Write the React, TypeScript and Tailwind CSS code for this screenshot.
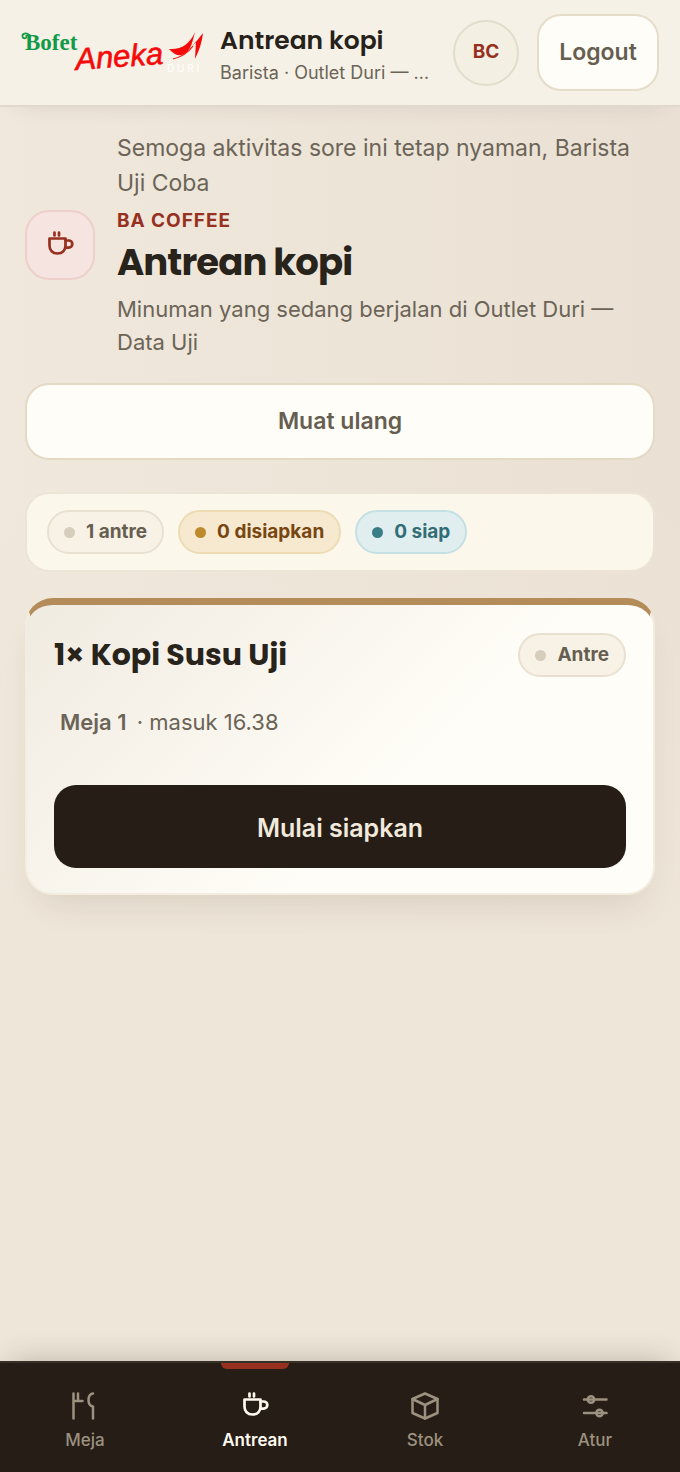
import React from 'react';
import { clsx } from 'clsx';

type IconProps = { className?: string };

const CupIcon: React.FC<IconProps> = ({ className }) => (
  <svg className={className} viewBox="0 0 28 28" fill="none" stroke="currentColor" strokeWidth="2.7" strokeLinecap="round" strokeLinejoin="round" aria-hidden="true">
    <path d="M3.5 7.5h16v7c0 5-3 8-8 8s-8-3-8-8z" />
    <path d="M19.500 9.500h3.200a3.600 3.600 0 0 1 0 7.200h-3.200" />
    <path d="M8.500 1.500v3M13 1.500v3" />
  </svg>
);

const TableIcon: React.FC<IconProps> = ({ className }) => (
  <svg className={className} viewBox="0 0 28 28" fill="none" stroke="currentColor" strokeWidth="2.5" strokeLinecap="round" strokeLinejoin="round" aria-hidden="true">
    <path d="M2.500 1.500v25M7 1.500V9M2.500 9h9" />
    <path d="M22 1.500c-3 0.500-4.500 3.500-4.500 6.500 0 3.500 1 6 4.500 6.500v12" />
  </svg>
);

const BoxIcon: React.FC<IconProps> = ({ className }) => (
  <svg className={className} viewBox="0 0 28 28" fill="none" stroke="currentColor" strokeWidth="2.5" strokeLinecap="round" strokeLinejoin="round" aria-hidden="true">
    <path d="M14 1.500 26.500 7v14L14 26.500 1.500 21V7z" />
    <path d="M1.500 7 14 13l12.500-6M14 13v13.500" />
  </svg>
);

const SlidersIcon: React.FC<IconProps> = ({ className }) => (
  <svg className={className} viewBox="0 0 28 28" fill="none" stroke="currentColor" strokeWidth="2.500" strokeLinecap="round" aria-hidden="true">
    <path d="M3 7.500h22.500M3 21h22.500" />
    <circle cx="10" cy="7.500" r="3.200" />
    <circle cx="18.500" cy="21" r="3.200" />
  </svg>
);

const Logo = () => (
  <svg className="h-[52px] w-[184px] shrink-0" viewBox="0 0 184 52" role="img" aria-label="Bofet Aneka Duri">
    <text x="4" y="23" fill="#139a48" fontFamily="'Liberation Serif', serif" fontWeight="700" fontSize="23">Bofet</text>
    <path d="M9 8.500C5 5 1 6.500 1.500 9.500c.5 2.500 4 2.500 4 0" fill="none" stroke="#139a48" strokeWidth="1.800" strokeLinecap="round" />
    <text x="55" y="43" fill="#f50a0a" stroke="#f50a0a" strokeWidth="0.600" fontFamily="'Liberation Sans', sans-serif" fontStyle="italic" fontSize="31" transform="rotate(-4 55 43)">Aneka</text>
    <path d="M148 22c12 1 21-5 26-17-2 8-3 12-5 16-6 9-13 10-21 1z" fill="#f50a0a" />
    <path d="M171 20 182 6c-1 9-4 18-8 26l1-18-6 9z" fill="#f50a0a" />
    <path d="M152 32c8-2 15-6 20-13" fill="none" stroke="#f50a0a" strokeWidth="1.200" />
    <text x="146" y="45" fill="#ffffff" fontFamily="Inter, sans-serif" fontSize="10">D U R I</text>
  </svg>
);

const toneStyles = {
  idle: { chip: 'bg-[#f8f1e6] border-[#e8e0d0] text-[#665e50]', dot: 'bg-[#d7cdbc]' },
  prep: { chip: 'bg-[#f6e9d0] border-[#eddbb2] text-[#774611]', dot: 'bg-[#be8a2b]' },
  ready: { chip: 'bg-[#e0eeef] border-[#c5e0e5] text-[#326d76]', dot: 'bg-[#3b7d87]' },
};

interface ChipProps {
  tone: keyof typeof toneStyles;
  children: React.ReactNode;
}

const Chip: React.FC<ChipProps> = ({ tone, children }) => (
  <span className={clsx('inline-flex h-11 shrink-0 items-center gap-[11px] rounded-full border-2 px-[15px] text-[19px] font-bold whitespace-nowrap', toneStyles[tone].chip)}>
    <span className={clsx('size-[11px] rounded-full', toneStyles[tone].dot)} />
    {children}
  </span>
);

const navItems = [
  { label: 'Meja', icon: TableIcon },
  { label: 'Antrean', icon: CupIcon, active: true },
  { label: 'Stok', icon: BoxIcon },
  { label: 'Atur', icon: SlidersIcon },
];

const Header = () => (
  <header className="sticky top-0 z-10 flex items-center border-b-2 border-[#e0d8ca] bg-[#f6f1e6] px-[21px] py-3.5 shadow-[0_14px_24px_-18px_rgba(60,45,25,0.14)]">
    <Logo />
    <div className="ml-[15px] min-w-0 flex-1 pt-1">
      <p className="truncate font-[Poppins,Inter,sans-serif] text-[25px] leading-9 font-semibold text-[#26221a]">Antrean kopi</p>
      <p className="truncate text-lg leading-7 text-[#6b6457]">Barista · Outlet Duri — Data Uji</p>
    </div>
    <span className="ml-[21px] flex size-[66px] shrink-0 items-center justify-center rounded-full border-2 border-[#e2dccb] bg-[#f4efe3] text-[19px] font-bold text-[#96301f]">BC</span>
    <button type="button" className="ml-[18px] h-[77px] w-[122px] shrink-0 rounded-3xl border-2 border-[#e5dcc9] bg-[#fffdf7] text-[23px] font-semibold text-[#665e50]">
      Logout
    </button>
  </header>
);

export default function App() {
  return (
    <div className="flex min-h-screen flex-col bg-[#eee6d9] bg-linear-to-r from-[#f0e8dc] to-[#eae1d4] font-[Inter,sans-serif] text-[#6b6457]">
      <Header />

      <main className="flex-1 bg-linear-to-b from-transparent from-30% to-[#eee6d9] to-70% px-[25px] pt-6 pb-8">
        <section className="flex items-center gap-[22px]">
          <div className="flex size-[70px] shrink-0 items-center justify-center rounded-3xl border-2 border-[#edd0ca] bg-[#f5e4df] text-[#96301f]">
            <CupIcon className="size-7" />
          </div>
          <div className="min-w-0">
            <p className="text-[23px] leading-[35px]">Semoga aktivitas sore ini tetap nyaman, Barista Uji Coba</p>
            <p className="mt-1 text-[19px] leading-8 font-bold tracking-wider text-[#96301f]">BA COFFEE</p>
            <h1 className="font-[Poppins,Inter,sans-serif] text-[37px] leading-[50px] font-bold tracking-tight text-[#29241b]">Antrean kopi</h1>
            <p className="mt-1.5 text-[22px] leading-[33px]">Minuman yang sedang berjalan di Outlet Duri — Data Uji</p>
          </div>
        </section>

        <button type="button" className="mt-6 h-[77px] w-full rounded-3xl border-2 border-[#e3d9c4] bg-[#fffdf7] text-[23px] font-semibold text-[#665e50]">
          Muat ulang
        </button>

        <div className="mt-8 flex min-h-20 flex-wrap items-center gap-3.5 rounded-3xl border-2 border-[#ece4d5] bg-[#fcf7eb] px-5 py-4">
          <Chip tone="idle">1 antre</Chip>
          <Chip tone="prep">0 disiapkan</Chip>
          <Chip tone="ready">0 siap</Chip>
        </div>

        <article className="mt-[26px] rounded-[28px] border-2 border-t-[7px] border-[#f3ecdf] border-t-[#b48c5a] bg-linear-[135deg] from-[#f0ebe1] to-[#fffdf7] to-60% px-[27px] pt-7 pb-[25px] shadow-[0_20px_36px_-14px_rgba(60,50,20,0.13)]">
          <div className="flex items-center justify-between gap-4">
            <h2 className="font-[Poppins,Inter,sans-serif] text-3xl leading-11 font-bold text-[#29241b]">1× Kopi Susu Uji</h2>
            <Chip tone="idle">Antre</Chip>
          </div>
          <p className="mt-7 px-1.5 text-[22px] leading-[34px]">
            <strong className="mr-1 font-semibold">Meja 1</strong> · masuk 16.38
          </p>
          <button type="button" className="mt-[46px] h-[83px] w-full rounded-[22px] bg-[#251d16] pt-1 text-[25px] font-semibold text-[#f2e9dc]">
            Mulai siapkan
          </button>
        </article>
      </main>

      <nav className="sticky bottom-0 grid grid-cols-4 border-t-2 border-[#373027] bg-[#251d16] shadow-[0_-10px_28px_-12px_rgba(60,50,30,0.32)]">
        {navItems.map(({ label, icon: Icon, active }) => (
          <a
            key={label}
            href="#"
            aria-current={active ? 'page' : undefined}
            className={clsx(
              'relative flex h-[109px] flex-col items-center pt-[29px] text-[17px]',
              active ? 'font-semibold text-[#fffaf0]' : 'font-medium text-[#9d917f]'
            )}
          >
            {active && <span className="absolute top-0 h-1.5 w-[68px] rounded-b-md bg-[#963120]" />}
            <Icon className="size-7" />
            <span className="mt-1.5 leading-7">{label}</span>
          </a>
        ))}
      </nav>
    </div>
  );
}
